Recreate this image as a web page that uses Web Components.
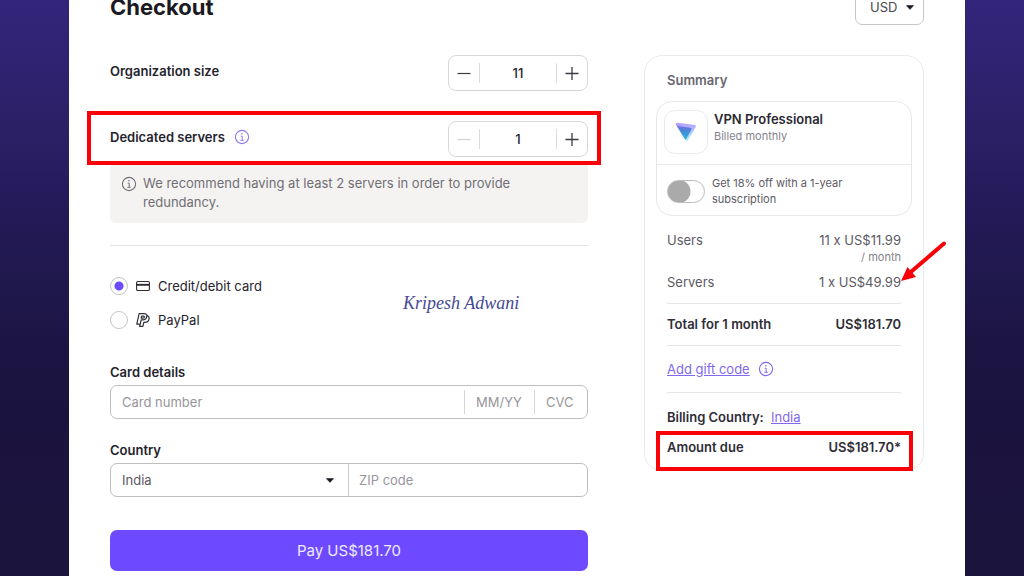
<!DOCTYPE html>
<html lang="en">
<head>
<meta charset="utf-8">
<meta name="viewport" content="width=device-width, initial-scale=1">
<title>Checkout</title>
<style>
  body {
    margin: 0;
    background: #1b143c;
    font: 13px/18px Inter, "Liberation Sans", sans-serif;
    color: #25232c;
  }
</style>
</head>
<body>
<checkout-page></checkout-page>

<script>
'use strict';

function makeTemplate(html) {
  const template = document.createElement('template');
  template.innerHTML = html;
  return template;
}

class BaseElement extends HTMLElement {
  constructor() {
    super();
    this.attachShadow({ mode: 'open' });
    this.shadowRoot.appendChild(this.constructor.template.content.cloneNode(true));
  }
}

class InfoIcon extends BaseElement {
  static template = makeTemplate(`
    <style>
      :host {
        display: inline-flex;
        flex: none;
        height: 16px;
        width: 16px;
      }
    </style>
    <svg width="16" height="16" viewBox="0 0 16 16" fill="none" stroke="currentColor" aria-hidden="true">
      <circle cx="8" cy="8" r="6.6" stroke-width="1.1"/>
      <path d="M6.7 7.2h1.5v4M6.4 11.3h3.3" stroke-width="1"/>
      <circle cx="7.9" cy="4.8" r=".8" fill="currentColor" stroke="none"/>
    </svg>
  `);
}
customElements.define('info-icon', InfoIcon);

class DropDown extends BaseElement {
  static template = makeTemplate(`
    <style>
      :host {
        display: grid;
        align-items: center;
      }

      select {
        appearance: none;
        background: none;
        border: 0;
        box-sizing: border-box;
        color: inherit;
        font: inherit;
        grid-area: 1 / 1;
        height: 100%;
        outline: none;
        padding: 0 18px 0 var(--select-indent, 11px);
        width: 100%;
      }

      svg {
        grid-area: 1 / 1;
        justify-self: end;
        margin-right: var(--caret-inset, 14px);
        pointer-events: none;
      }
    </style>
    <select></select>
    <svg width="8" height="5" viewBox="0 0 8 5" aria-hidden="true"><path d="M.4.6h7.2L4 4.4z" fill="#1b1a22" stroke="#1b1a22" stroke-width=".6" stroke-linejoin="round"/></svg>
  `);

  connectedCallback() {
    const select = this.shadowRoot.querySelector('select');
    select.setAttribute('aria-label', this.getAttribute('label'));
    select.replaceChildren(...this.getAttribute('options').split(',').map((name) => new Option(name)));
  }
}
customElements.define('drop-down', DropDown);

class QuantityStepper extends BaseElement {
  static template = makeTemplate(`
    <style>
      :host {
        display: flex;
        align-items: center;
        justify-content: space-between;
      }

      label {
        display: flex;
        align-items: center;
        font-weight: 600;
        gap: 9px;
        padding-bottom: 4px;
      }

      .box {
        border: 1px solid #d9d8d8;
        border-radius: 8px;
        box-sizing: border-box;
        display: flex;
        align-items: center;
        height: 36px;
        width: 140px;
      }

      button {
        background: none;
        border: 0;
        color: #3c3a44;
        display: flex;
        flex: none;
        align-items: center;
        justify-content: center;
        height: 100%;
        padding: 0;
        width: 30px;
      }

      button:disabled {
        color: #d2d1d3;
      }

      input {
        background: none;
        border: solid #dcdbdb;
        border-width: 0 1px;
        border-radius: 0;
        box-sizing: border-box;
        color: inherit;
        flex: 1;
        font: inherit;
        font-weight: 500;
        height: 20px;
        min-width: 0;
        outline: none;
        padding: 0;
        text-align: center;
      }
    </style>
    <label for="count"><slot></slot></label>
    <div class="box">
      <button type="button" class="less" aria-label="Decrease">
        <svg width="14" height="14" viewBox="0 0 14 14" stroke="currentColor" stroke-width="1.2"><path d="M.5 7.5h13"/></svg>
      </button>
      <input id="count" type="text" inputmode="numeric">
      <button type="button" class="more" aria-label="Increase">
        <svg width="14" height="14" viewBox="0 0 14 14" stroke="currentColor" stroke-width="1.3"><path d="M.5 7.5h13M7 1v13"/></svg>
      </button>
    </div>
  `);

  connectedCallback() {
    this.input = this.shadowRoot.querySelector('input');
    this.less = this.shadowRoot.querySelector('.less');
    this.less.addEventListener('click', () => this.setCount(this.count - 1));
    this.shadowRoot.querySelector('.more').addEventListener('click', () => this.setCount(this.count + 1));
    this.setCount(Number(this.getAttribute('value')));
  }

  setCount(count) {
    this.count = Math.max(1, count);
    this.input.value = this.count;
    this.less.disabled = this.count === 1;
  }
}
customElements.define('quantity-stepper', QuantityStepper);

// Red frame laid over whatever is slotted into it
class MarkedArea extends BaseElement {
  static template = makeTemplate(`
    <style>
      :host {
        display: block;
        position: relative;
      }

      .frame {
        border: 4px solid #fb0007;
        inset: var(--frame-inset);
        pointer-events: none;
        position: absolute;
        z-index: 1;
      }
    </style>
    <slot></slot>
    <div class="frame"></div>
  `);
}
customElements.define('marked-area', MarkedArea);

class NoticeBox extends BaseElement {
  static template = makeTemplate(`
    <style>
      :host {
        background: #f4f3f2;
        border-radius: 6px;
        color: #716f75;
        display: flex;
        gap: 6px;
        line-height: 19px;
        padding: 12px 11px 11px;
      }

      info-icon {
        margin-top: 2px;
      }

      p {
        margin: 0;
        max-width: 380px;
      }
    </style>
    <info-icon></info-icon>
    <p><slot></slot></p>
  `);
}
customElements.define('notice-box', NoticeBox);

class PaymentMethods extends BaseElement {
  static template = makeTemplate(`
    <style>
      :host {
        display: grid;
        grid-template-columns: 293fr 185fr;
        align-items: center;
      }

      .methods {
        display: grid;
        gap: 16px;
      }

      label {
        display: flex;
        align-items: center;
        gap: 8px;
      }

      input {
        appearance: none;
        background: #fff;
        border: 1px solid #c4c3c5;
        border-radius: 50%;
        box-sizing: border-box;
        flex: none;
        height: 18px;
        margin: 0;
        width: 18px;
      }

      input:checked {
        background: radial-gradient(circle, #6d4aff 4px, #fff 5px);
      }

      svg {
        flex: none;
      }
    </style>
    <div class="methods">
      <label>
        <input type="radio" name="method" checked>
        <svg width="14" height="14" viewBox="0 0 14 14" fill="none" stroke="#2c2a33" aria-hidden="true">
          <rect x=".6" y="2.5" width="12.8" height="9" rx="1.3" stroke-width="1.1"/>
          <path d="M.6 5.8h12.8" stroke-width="1.9"/>
        </svg>
        <span>Credit/debit card</span>
      </label>
      <label>
        <input type="radio" name="method">
        <svg width="14" height="14" viewBox="0 0 14 14" fill="none" stroke="#33313a" stroke-width="1.2" stroke-linejoin="round" aria-hidden="true">
          <path d="M3.1.7h5c2 0 3 1 2.7 2.7-.4 2.3-1.7 3.4-4 3.4H5.2l-1 4.400H.8z"/>
          <path d="M10.900 2.700c1.700.4 2.500 1.500 2.200 3.200-.4 2.300-1.900 3.400-4.200 3.400H7.800l-.9 4H3.600l.5-2.200M5.600 3.200h1.800c.8 0 1.200.4 1 1-.2.7-.7 1-1.400 1H5.200z"/>
        </svg>
        <span>PayPal</span>
      </label>
    </div>
    <slot></slot>
  `);
}
customElements.define('payment-methods', PaymentMethods);

class FieldGroup extends BaseElement {
  static template = makeTemplate(`
    <style>
      :host {
        display: block;
      }

      .title {
        font-weight: 600;
        margin-bottom: 4px;
      }

      .fields {
        border: 1px solid #bebdbf;
        border-radius: 7px;
        box-sizing: border-box;
        display: flex;
        align-items: center;
        height: 34px;
      }

      ::slotted(*) {
        height: 100%;
      }

      ::slotted(input) {
        background: none;
        border: 0;
        box-sizing: border-box;
        color: inherit;
        font: inherit;
        outline: none;
        padding: 0 11px;
      }
    </style>
    <div class="title" id="title"><slot name="title"></slot></div>
    <div class="fields" role="group" aria-labelledby="title"><slot></slot></div>
  `);
}
customElements.define('field-group', FieldGroup);

class SummaryLine extends BaseElement {
  static template = makeTemplate(`
    <style>
      :host {
        display: flex;
        justify-content: space-between;
        text-align: right;
      }

      :host([strong]) {
        color: #2f2d36;
        font-weight: 600;
      }
    </style>
    <span><slot name="name"></slot></span>
    <span><slot></slot></span>
  `);
}
customElements.define('summary-line', SummaryLine);

class PlanCard extends BaseElement {
  static template = makeTemplate(`
    <style>
      :host {
        border: 1px solid #e9e8e8;
        border-radius: 16px;
        box-sizing: border-box;
        display: block;
      }

      .plan {
        border-bottom: 1px solid #e9e8e8;
        display: flex;
        gap: 6px;
        padding: 8px 7px 10px;
      }

      .logo {
        border: 1px solid #ebeaea;
        border-radius: 11px;
        box-sizing: border-box;
        display: flex;
        flex: none;
        align-items: center;
        justify-content: center;
        height: 44px;
        width: 44px;
      }

      .name {
        color: #2b2932;
        font-weight: 600;
      }

      .term {
        color: #85838a;
        font-size: 11px;
        line-height: 16px;
      }

      .offer {
        display: flex;
        align-items: center;
        font-size: 11px;
        gap: 7px;
        line-height: 16px;
        padding: 10px 10px 8px;
      }

      input {
        appearance: none;
        background: radial-gradient(circle at 11px 50%, #aaa 11px, #fff 12px);
        border: 1px solid #bbb;
        border-radius: 12px;
        box-sizing: border-box;
        flex: none;
        height: 23px;
        margin: 0;
        width: 38px;
      }

      .offer span {
        max-width: 150px;
      }
    </style>
    <div class="plan">
      <div class="logo">
        <svg width="22" height="20" viewBox="0 0 22 20" aria-hidden="true">
          <defs>
            <linearGradient id="front" x1="0" y1="0" x2="0" y2="1">
              <stop offset="0" stop-color="#8d63f5"/>
              <stop offset=".4" stop-color="#4886d6"/>
              <stop offset="1" stop-color="#2cb6e2"/>
            </linearGradient>
            <linearGradient id="back" x1="0" y1="0" x2="0" y2="1">
              <stop offset="0" stop-color="#b49cff"/>
              <stop offset="1" stop-color="#b5ecf8"/>
            </linearGradient>
          </defs>
          <path d="M2.500.8 19.800 2.900Q21.600 3.200 20.700 4.900L13 18.200Q11.700 20 10.600 18L1 3Q.2.800 2.500.800z" fill="url(#back)"/>
          <path d="M1 2.400Q1.600 3.800 3.500 4L15.400 5.700Q17.200 6 16.400 7.500L11.200 16.900Q10.500 18 9.800 16.900z" fill="url(#front)"/>
        </svg>
      </div>
      <div>
        <div class="name">VPN Professional</div>
        <div class="term">Billed monthly</div>
      </div>
    </div>
    <label class="offer">
      <input type="checkbox" role="switch">
      <span>Get 18% off with a 1-year subscription</span>
    </label>
  `);
}
customElements.define('plan-card', PlanCard);

class OrderSummary extends BaseElement {
  static template = makeTemplate(`
    <style>
      :host {
        border: 1px solid #ebeaea;
        border-radius: 18px;
        box-sizing: border-box;
        color: #5c5a63;
        display: block;
        padding: 15px 11px 14px;
      }

      h2 {
        color: #69676f;
        font-size: 13px;
        font-weight: 600;
        line-height: 18px;
        margin: 0 11px 12px;
      }

      .lines {
        display: grid;
        padding: 15px 11px 0;
      }

      small {
        color: #85838a;
        display: block;
        font-size: 11px;
        line-height: 16px;
      }

      hr {
        border: 0;
        border-top: 1px solid #e6e5e5;
        margin: 12px 0 11px;
        width: 100%;
      }

      .servers {
        margin-top: 8px;
      }

      .gift {
        display: flex;
        align-items: center;
        gap: 8px;
        margin: 3px 0 2px;
      }

      .due {
        margin-top: 12px;
        --frame-inset: -7px -12px -15px -11px;
      }

      .country {
        color: #2f2d36;
        font-weight: 600;
        margin-top: 4px;
      }

      .country a {
        font-weight: 400;
        margin-left: 4px;
      }

      a,
      info-icon {
        color: #8168ee;
      }

      .price {
        position: relative;
      }

      .arrow {
        left: 100%;
        pointer-events: none;
        position: absolute;
        top: -34px;
      }
    </style>
    <h2>Summary</h2>
    <plan-card></plan-card>
    <div class="lines">
      <summary-line><span slot="name">Users</span>11 x US$11.99<small>/ month</small></summary-line>
      <summary-line class="servers">
        <span slot="name">Servers</span>
        <span class="price">1 x US$49.99<svg class="arrow" width="48" height="46" viewBox="0 0 48 46" aria-hidden="true">
          <path d="M43 3.500 11 31" stroke="#fb0007" stroke-width="4" stroke-linecap="round"/>
          <path d="M0 41 6.500 27l8.500 10z" fill="#fb0007"/>
        </svg></span>
      </summary-line>
      <hr>
      <summary-line strong><span slot="name">Total for 1 month</span>US$181.70</summary-line>
      <hr>
      <div class="gift"><a href="#gift">Add gift code</a><info-icon></info-icon></div>
      <hr>
      <div class="country">Billing Country: <a href="#country">India</a></div>
      <marked-area class="due">
        <summary-line strong><span slot="name">Amount due</span>US$181.70*</summary-line>
      </marked-area>
    </div>
  `);
}
customElements.define('order-summary', OrderSummary);

class CheckoutForm extends BaseElement {
  static template = makeTemplate(`
    <style>
      :host {
        display: block;
      }

      .servers {
        margin: 30px 0 5px;
        --frame-inset: -10px -13px -8px -23px;
      }

      .servers info-icon {
        color: #8f77f5;
      }

      hr {
        border: 0;
        border-top: 1px solid #e6e5e5;
        margin: 22px 0 31px;
      }

      .signature {
        color: #454a92;
        font: italic 18px/24px "Z003", "URW Chancery L", "Liberation Serif", cursive;
        white-space: nowrap;
      }

      .card {
        margin: 34px 0 22px;
      }

      input::placeholder {
        color: #97959b;
        opacity: 1;
      }

      .number {
        flex: 1;
        min-width: 0;
      }

      input.expiry,
      input.cvc {
        border-left: 1px solid #d5d4d6;
        height: 24px;
        width: 70px;
      }

      input.cvc {
        width: 53px;
      }

      drop-down {
        border-right: 1px solid #c9c8ca;
        box-sizing: border-box;
        color: #5a5861;
        width: 50%;
      }

      input.zip {
        padding-left: 10px;
        width: 50%;
      }

      .pay {
        background: #6d4aff;
        border: 0;
        border-radius: 7px;
        color: #eeeaff;
        display: block;
        font: inherit;
        font-size: 15px;
        height: 41px;
        margin: 33px 0 20px;
        width: 100%;
      }
    </style>
    <form>
      <quantity-stepper value="11">Organization size</quantity-stepper>
      <marked-area class="servers">
        <quantity-stepper value="1">Dedicated servers <info-icon></info-icon></quantity-stepper>
      </marked-area>
      <notice-box>We recommend having at least 2 servers in order to provide redundancy.</notice-box>
      <hr>
      <payment-methods><span class="signature">Kripesh Adwani</span></payment-methods>
      <field-group class="card">
        <label slot="title" for="number">Card details</label>
        <input class="number" id="number" placeholder="Card number">
        <input class="expiry" aria-label="Expiry date" placeholder="MM/YY">
        <input class="cvc" aria-label="Security code" placeholder="CVC">
      </field-group>
      <field-group>
        <span slot="title">Country</span>
        <drop-down label="Country" options="India"></drop-down>
        <input class="zip" aria-label="ZIP code" placeholder="ZIP code">
      </field-group>
      <button type="button" class="pay">Pay US$181.70</button>
    </form>
  `);
}
customElements.define('checkout-form', CheckoutForm);

class CheckoutPage extends BaseElement {
  static template = makeTemplate(`
    <style>
      :host {
        background: linear-gradient(#33257b, #2b2066 130px, #241a58 210px, #1f184b 290px, #1b1340 370px, #1b143c 576px);
        box-sizing: border-box;
        display: flex;
        height: 100vh;
        overflow: hidden;
        padding: 0 59px 0 69px;
      }

      main {
        background: #fff;
        flex: 1;
        display: flex;
        flex-direction: column;
        padding: 0 41px;
      }

      /* the header is scrolled partly out of view */
      header {
        display: flex;
        align-items: center;
        justify-content: space-between;
        margin: -11px 0 30px;
      }

      h1 {
        color: #1b1922;
        font-size: 22px;
        font-weight: 700;
        line-height: 36px;
        margin: 0;
      }

      drop-down {
        border: 1px solid #c6c5c7;
        border-radius: 7px;
        box-sizing: border-box;
        color: #4a4852;
        height: 36px;
        width: 69px;
        --select-indent: 14px;
        --caret-inset: 9px;
      }

      .columns {
        display: grid;
        grid-template-columns: minmax(0, 1fr) 280px;
        align-items: start;
        gap: 56px;
      }
    </style>
    <main>
      <header>
        <h1>Checkout</h1>
        <drop-down label="Currency" options="USD"></drop-down>
      </header>
      <div class="columns">
        <checkout-form></checkout-form>
        <order-summary></order-summary>
      </div>
    </main>
  `);
}
customElements.define('checkout-page', CheckoutPage);
</script>
</body>
</html>
